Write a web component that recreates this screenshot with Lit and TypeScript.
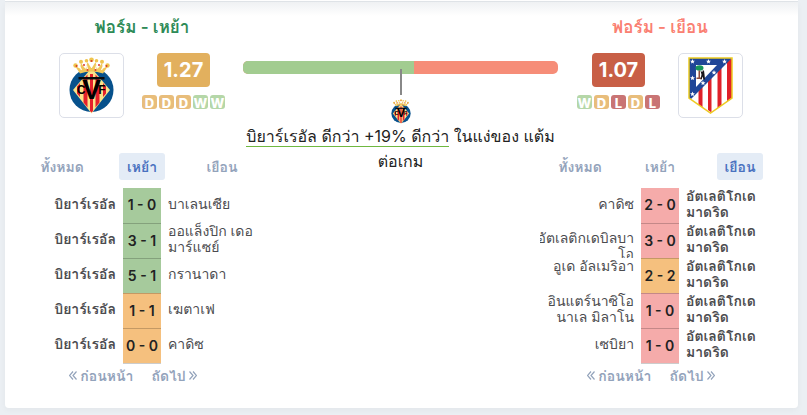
import { LitElement, html, css, svg } from "lit";
import { customElement, property, state } from "lit/decorators.js";
import { classMap } from "lit/directives/class-map.js";
import { styleMap } from "lit/directives/style-map.js";

type Outcome = "W" | "D" | "L";

interface Match {
  home: string[];
  away: string[];
  score: string;
  outcome: Outcome;
}

const VILLARREAL = ["บิยาร์เรอัล"];
const ATLETICO = ["อัตเลติโกเด", "มาดริด"];

const HOME_MATCHES: Match[] = [
  { home: VILLARREAL, away: ["บาเลนเซีย"], score: "1 - 0", outcome: "W" },
  { home: VILLARREAL, away: ["ออแล็งปิก เดอ", "มาร์แซย์"], score: "3 - 1", outcome: "W" },
  { home: VILLARREAL, away: ["กรานาดา"], score: "5 - 1", outcome: "W" },
  { home: VILLARREAL, away: ["เฆตาเฟ"], score: "1 - 1", outcome: "D" },
  { home: VILLARREAL, away: ["คาดิซ"], score: "0 - 0", outcome: "D" },
];

const AWAY_MATCHES: Match[] = [
  { home: ["คาดิซ"], away: ATLETICO, score: "2 - 0", outcome: "L" },
  { home: ["", "อัตเลติกเดบิลบา", "โอ"], away: ATLETICO, score: "3 - 0", outcome: "L" },
  { home: ["อูเด อัลเมริอา", ""], away: ATLETICO, score: "2 - 2", outcome: "D" },
  { home: ["อินแตร์นาซิโอ", "นาเล มิลาโน"], away: ATLETICO, score: "1 - 0", outcome: "L" },
  { home: ["เซบิยา"], away: ATLETICO, score: "1 - 0", outcome: "L" },
];

const STAR = "M0-2.4L.7-.8 2.4-.7 1.1.4 1.5 2.1 0 1.2-1.5 2.1-1.1.4-2.4-.7-.7-.8Z";

@customElement("team-crest")
export class TeamCrest extends LitElement {
  @property() team = "villarreal";

  static styles = css`
    :host { display: block; }
    .crest { display: block; width: 100%; height: 100%; }
    .letter { font-family: "Liberation Sans", sans-serif; font-weight: 700; font-size: 12px; }
    .initial { font-family: "Liberation Sans", sans-serif; font-weight: 700; font-size: 28px; }
  `;

  private villarreal() {
    return svg`
      <circle cx="22.5" cy="33" r="22" fill="#07518c"></circle>
      <path d="M22.5 11L41 33 22.5 56.500 4 33Z" fill="#fbe38a"></path>
      <path d="M14.500 22l4-4.500v33l-4-5zM26.500 17.500l4 4.500v23.500l-4 5zM8 29.500l3-3.500v14l-3-3.500zM34 26l3 3.500v7L34 40z" fill="#e5202b"></path>
      <path d="M21 17h3v37l-1.500 1.500L21 54z" fill="#e5202b"></path>
      <path d="M11 16.500L6 9l5 2.500 1-5.500 4.500 6 2-7 4 6.500 4-6.500 2 7 4.500-6 1 5.500L39 9l-5 7.500Q22.500 12.500 11 16.500Z" fill="#f1c75a"></path>
      <path d="M10.500 9l2 4M17.500 8.500l1 4M27.500 8.500l-1 4M34.500 9l-2 4" fill="none" stroke="#fff" stroke-width="1.200"></path>
      <g fill="#efc44e">
        <circle cx="6.500" cy="8.500" r="2.200"></circle><circle cx="12" cy="4.800" r="2"></circle>
        <circle cx="17.500" cy="3.800" r="1.800"></circle><circle cx="22.500" cy="2.800" r="2.300"></circle>
        <circle cx="27.500" cy="3.800" r="1.800"></circle><circle cx="33" cy="4.800" r="2"></circle>
        <circle cx="38.500" cy="8.500" r="2.200"></circle>
      </g>
      <g fill="#d9372c">
        <circle cx="7.500" cy="9" r="1"></circle><circle cx="15" cy="8" r="1"></circle>
        <circle cx="22.500" cy="4" r="1"></circle><circle cx="30" cy="8" r="1"></circle>
        <circle cx="37.500" cy="9" r="1"></circle><circle cx="18.500" cy="13" r="1"></circle>
        <circle cx="26.500" cy="13" r="1"></circle>
      </g>
      <path d="M9.500 20h26v2.500h-26z" fill="#0b0b0b"></path>
      <text class="initial" x="22.500" y="42" text-anchor="middle">V</text>
      <text class="letter" x="12" y="37" text-anchor="middle">C</text>
      <text class="letter" x="33" y="37" text-anchor="middle">F</text>`;
  }

  private atletico() {
    const stars = [[4.5, 4.5], [20.5, 4.5], [36.5, 4.5], [4.5, 21], [4.5, 37], [15, 26], [26, 15.5]];
    return svg`
      <path d="M1 1H44V41L22.500 56 1 41Z" fill="#fff"></path>
      <path d="M10.500 32l4-4v22.500l-4-3zM20 24l3.500-4v35.500l-3.500-2.500zM29.500 14l4-4v38.500l-4 3zM39 5l5-4v40l-5 3.500z" fill="#df2029"></path>
      <path d="M1 1H44L3 42 1 41Z" fill="#1f4698"></path>
      <path d="M8 8H29L8 30Z" fill="#fff"></path>
      <ellipse cx="11.500" cy="11" rx="4" ry="2.800" fill="#16955a"></ellipse>
      <path d="M10.500 13.500h1.500v7h2v1.500H8.500v-1.500h2z" fill="#8c4a3a"></path>
      <path d="M12.500 14l2 1v-1.500h1.500l.5 4 .5 5h-1.500l-1-3-1 3H12.500l1-5z" fill="#17151a"></path>
      ${stars.map(([x, y]) => svg`<path d=${STAR} transform=${`translate(${x} ${y})`} fill="#fff"></path>`)}
      <path d="M1 1H44V41L22.500 56 1 41Z" fill="none" stroke="#edcb21" stroke-width="1.500"></path>`;
  }

  render() {
    return html`<svg class="crest" viewBox="0 0 45 57" aria-hidden="true">
      ${this.team === "atletico" ? this.atletico() : this.villarreal()}
    </svg>`;
  }
}

@customElement("form-summary")
export class FormSummary extends LitElement {
  @property() team = "villarreal";
  @property() heading = "";
  @property() points = "";
  @property({ attribute: false }) form: Outcome[] = [];
  @property({ type: Boolean, reflect: true }) away = false;

  static styles = css`
    :host { display: block; color: #2e8b57; }
    :host([away]) { color: #fa8072; }
    .heading {
      margin: 0; text-align: center; font-size: 17px; line-height: 24px; font-weight: 600;
    }
    .row { display: flex; justify-content: center; gap: 18px; margin-top: 14px; }
    :host([away]) .row { flex-direction: row-reverse; }
    .frame {
      box-sizing: border-box; width: 65px; height: 65px; padding: 3px;
      border: 1px solid #dcdfe8; border-radius: 5px; background: #fff;
    }
    .logo { height: 57px; }
    .stats { display: flex; flex-direction: column; align-items: center; gap: 8px; }
    .points {
      padding: 0 7px; border-radius: 4px; background: #e2b05e; color: #fff;
      font-size: 20px; line-height: 34px; font-weight: 700;
    }
    :host([away]) .points { background: #c85f46; }
    .form { display: flex; gap: 2px; }
    .mark {
      display: flex; justify-content: center; width: 15px; height: 14px; border-radius: 3px;
      color: #fff; font-size: 13px; line-height: 16px; font-weight: 800;
    }
    .W { background: #b5d7a8; }
    .D { background: #e8bd7b; }
    .L { background: #c97474; }
  `;

  render() {
    return html`
      <h2 class="heading">${this.heading}</h2>
      <div class="row">
        <div class="frame"><team-crest class="logo" team=${this.team}></team-crest></div>
        <div class="stats">
          <div class="points">${this.points}</div>
          <div class="form">${this.form.map((f) => html`<span class="mark ${f}">${f}</span>`)}</div>
        </div>
      </div>`;
  }
}

@customElement("match-list")
export class MatchList extends LitElement {
  @property({ attribute: false }) matches: Match[] = [];
  @property() side: "home" | "away" = "home";
  @state() private active = -1;

  static styles = css`
    :host { display: block; }
    button { border: 0; background: none; font: inherit; color: inherit; cursor: pointer; }
    .tabs {
      display: grid; grid-template-columns: repeat(3, 1fr); justify-items: center;
      color: #93a3bb; font-size: 14px; line-height: 27px; font-weight: 600;
    }
    .tab { padding: 0 8px; border-radius: 3px; }
    .active { background: #e4ecf6; color: #4a72c0; }
    .games { width: 100%; margin-top: 8px; border-collapse: collapse; table-layout: fixed; }
    td { padding: 0; height: 35px; vertical-align: top; }
    .side { color: #4c4c4f; font-size: 14px; line-height: 16px; }
    .box {
      display: flex; flex-direction: column; justify-content: center;
      height: 32px; padding: 0 7px; white-space: nowrap;
    }
    .host .box { align-items: flex-end; }
    .overflowing { height: 35px; justify-content: flex-start; overflow: hidden; }
    .line { min-height: 16px; }
    .lead { min-height: 7px; }
    .own { font-weight: 600; }
    .score {
      box-sizing: border-box; width: 38px; text-align: center; color: #222;
      font-size: 14px; line-height: 34px; font-weight: 600; border-bottom: 1px solid #0003;
    }
    .W { background: #a6ca9c; }
    .D { background: #f5c07e; }
    .L { background: #f5abaa; }
    .pager {
      display: flex; justify-content: center; gap: 18px; margin: 1px 18px 0 0;
      color: #93a3bb; font-size: 14px; line-height: 22px; font-weight: 600;
    }
    .page { display: flex; align-items: center; gap: 3px; padding: 0; }
    .chevron { width: 8px; height: 9px; fill: none; stroke: currentColor; stroke-width: 1.2; }
  `;

  private team(lines: string[], classes: string) {
    const long = lines.length > 2;
    return html`<td class="side ${classes}">
      <div class=${classMap({ box: true, overflowing: long })}>
        ${lines.map((l, i) => html`<span class=${long && i === 0 ? "lead" : "line"}>${l}</span>`)}
      </div>
    </td>`;
  }

  render() {
    const home = this.side === "home";
    const selected = this.active < 0 ? (home ? 1 : 2) : this.active;
    return html`
      <div class="tabs" role="tablist">
        ${["ทั้งหมด", "เหย้า", "เยือน"].map(
          (t, i) => html`<button
            class=${classMap({ tab: true, active: i === selected })}
            role="tab"
            aria-selected=${i === selected}
            @click=${() => (this.active = i)}
          >${t}</button>`
        )}
      </div>
      <table class="games">
        <colgroup><col /><col width="38" /><col /></colgroup>
        <tbody>
          ${this.matches.map(
            (m) => html`<tr>
              ${this.team(m.home, home ? "host own" : "host")}
              <td class="score ${m.outcome}">${m.score}</td>
              ${this.team(m.away, home ? "" : "own")}
            </tr>`
          )}
        </tbody>
      </table>
      <div class="pager">
        <button class="page">
          <svg class="chevron" viewBox="0 0 8 9"><path d="M4 .5l-3.500 4 3.500 4M7.500 .5L4 4.500l3.500 4"></path></svg>ก่อนหน้า
        </button>
        <button class="page">
          ถัดไป<svg class="chevron" viewBox="0 0 8 9"><path d="M.5 .5L4 4.500l-3.500 4M4 .5l3.500 4-3.500 4"></path></svg>
        </button>
      </div>`;
  }
}

@customElement("form-comparison")
export class FormComparison extends LitElement {
  @property({ type: Number }) home = 1.27;
  @property({ type: Number }) away = 1.07;

  static styles = css`
    :host { display: block; }
    .bar { display: flex; height: 13px; border-radius: 5px; overflow: hidden; background: #f68d78; }
    .fill { background: #a2cc90; }
    .verdict { display: flex; flex-direction: column; align-items: center; margin-top: -5px; }
    .pin { position: relative; width: 2px; height: 26px; background: #888; }
    .logo { width: 20px; height: 25px; margin-top: 4px; }
    .text {
      margin: 0; color: #222; font-size: 16px; line-height: 25px; text-align: center; white-space: nowrap;
    }
    .better { border-bottom: 1px solid #6fb840; }
  `;

  render() {
    const share = (this.home / (this.home + this.away)) * 100;
    return html`
      <div class="bar"><div class="fill" style=${styleMap({ width: `${share}%` })}></div></div>
      <div class="verdict">
        <span class="pin"></span>
        <team-crest class="logo" team="villarreal"></team-crest>
        <p class="text">
          <span class="better">บิยาร์เรอัล ดีกว่า +19% ดีกว่า</span> ในแง่ของ แต้ม<br />ต่อเกม
        </p>
      </div>`;
  }
}

@customElement("app-root")
export class AppRoot extends LitElement {
  static styles = css`
    :host {
      display: block; min-height: 100vh; box-sizing: border-box; padding: 0 9px 7px 5px;
      background: #ebeff3; font-family: Inter, Tahoma, Loma, "Noto Sans Thai", "Noto Sans", sans-serif;
    }
    .above { height: 1px; background: #fff; border-bottom: 1px solid #e1e5e9; }
    .card {
      display: grid; grid-template-columns: 240px minmax(0, 1fr) 240px;
      padding: 13px 18px 21px 17px; border-radius: 0 0 4px 4px;
      background: linear-gradient(#eff1f3, #fff 14px); box-shadow: 0 2px 6px #0000000a;
    }
    .column { display: flex; flex-direction: column; gap: 35px; }
    .middle { margin: 46px -18px 0 -19px; }
  `;

  render() {
    return html`
      <div class="above"></div>
      <main class="card">
        <section class="column">
          <form-summary team="villarreal" heading="ฟอร์ม - เหย้า" points="1.27"
            .form=${["D", "D", "D", "W", "W"]}></form-summary>
          <match-list side="home" .matches=${HOME_MATCHES}></match-list>
        </section>
        <form-comparison class="middle" home="1.27" away="1.07"></form-comparison>
        <section class="column">
          <form-summary away team="atletico" heading="ฟอร์ม - เยือน" points="1.07"
            .form=${["W", "D", "L", "D", "L"]}></form-summary>
          <match-list side="away" .matches=${AWAY_MATCHES}></match-list>
        </section>
      </main>`;
  }
}
